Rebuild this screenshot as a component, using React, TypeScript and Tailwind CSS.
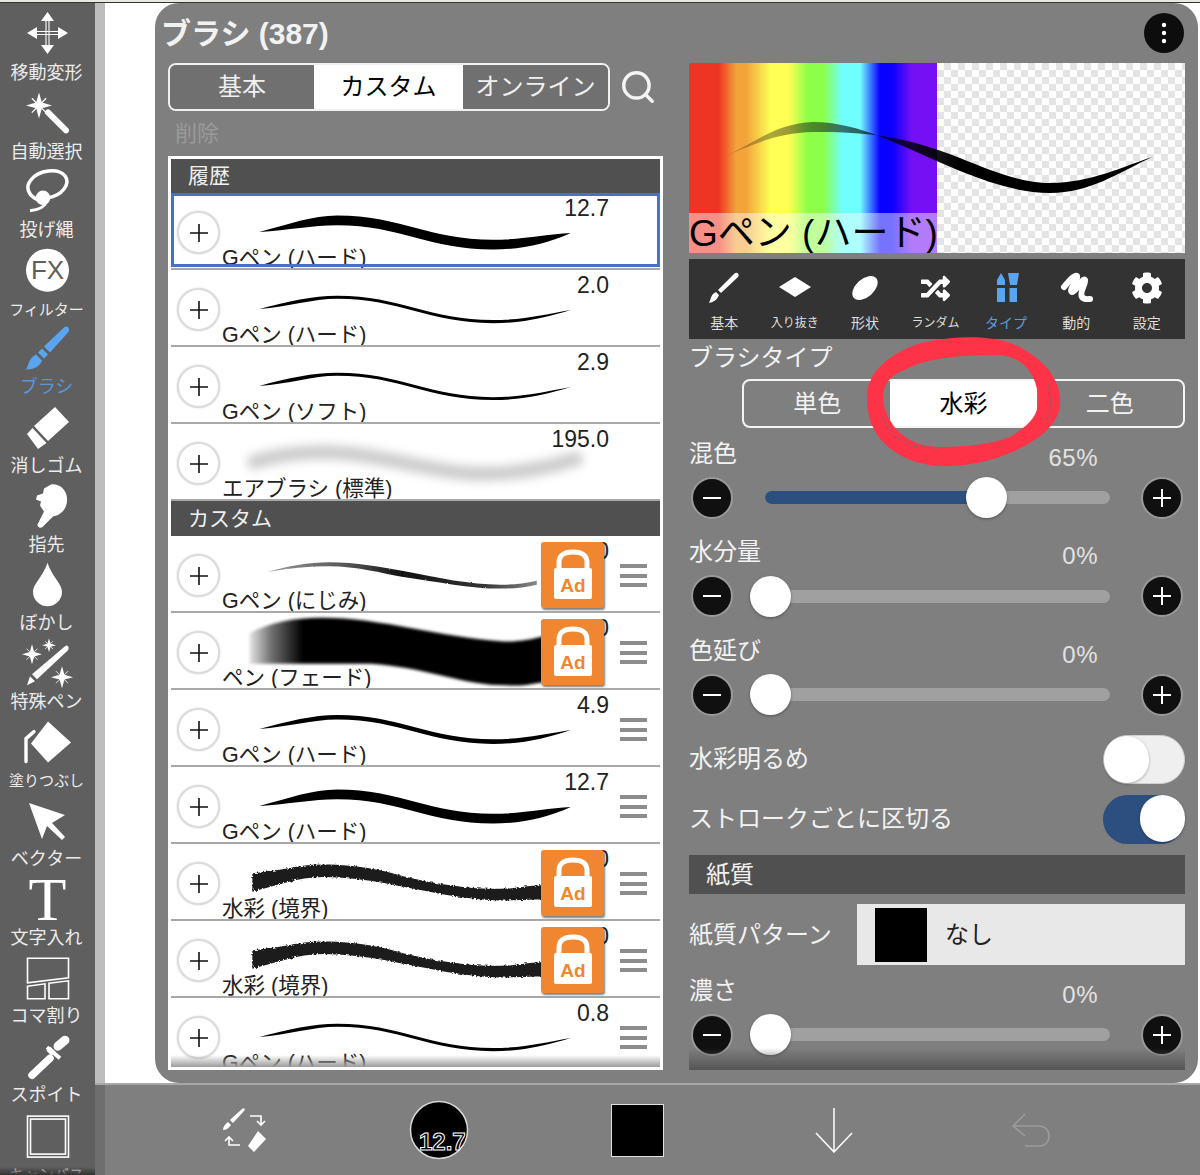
import { FaCog, FaRandom } from "react-icons/fa"
import { Search } from "lucide-react"

const fontSans = "font-['Liberation_Sans','Noto_Sans_CJK_JP',sans-serif]"

// tapered wave used by every pen preview, x in page coords, y local to the row
function penPath(t: number, x0 = 255, x1 = 575, y = 0) {
  const top = 28 + y
  const low = 53 + y
  const sy = 40 + y
  const ey = 41 + y
  return `M${x0} ${sy} C${x0 + 30} ${sy - 8} ${x0 + 55} ${top - t} ${x0 + 80} ${top - t} C${x0 + 145} ${top - t} ${x1 - 145} ${low - t} ${x1 - 80} ${low - t} C${x1 - 50} ${low - t} ${x1 - 25} ${ey + 6 - t} ${x1} ${ey} C${x1 - 25} ${ey + 6 + t} ${x1 - 50} ${low + t} ${x1 - 80} ${low + t} C${x1 - 145} ${low + t} ${x0 + 145} ${top + t} ${x0 + 80} ${top + t} C${x0 + 55} ${top + t} ${x0 + 30} ${sy - 2} ${x0} ${sy}Z`
}

type BrushRow = {
  name: string
  value: string
  kind: "pen" | "air" | "bleed" | "fade" | "rough"
  t?: number
  ad?: boolean
}

const historyRows: BrushRow[] = [
  { name: "Gペン (ハード)", value: "12.7", kind: "pen", t: 5 },
  { name: "Gペン (ハード)", value: "2.0", kind: "pen", t: 1.6 },
  { name: "Gペン (ソフト)", value: "2.9", kind: "pen", t: 1.5 },
  { name: "エアブラシ (標準)", value: "195.0", kind: "air" },
]

const customRows: BrushRow[] = [
  { name: "Gペン (にじみ)", value: "3.0", kind: "bleed", ad: true },
  { name: "ペン (フェード)", value: "50.0", kind: "fade", ad: true },
  { name: "Gペン (ハード)", value: "4.9", kind: "pen", t: 2.4 },
  { name: "Gペン (ハード)", value: "12.7", kind: "pen", t: 5 },
  { name: "水彩 (境界)", value: "20.0", kind: "rough", ad: true },
  { name: "水彩 (境界)", value: "20.0", kind: "rough", ad: true },
  { name: "Gペン (ハード)", value: "0.8", kind: "pen", t: 1.6 },
]

function StrokePreview({ kind, t = 2 }: { kind: BrushRow["kind"]; t?: number }) {
  return (
    <svg className="absolute inset-0 h-full w-full" viewBox="171 0 489 77">
      {kind === "pen" && <path d={penPath(t)} fill="#000" />}
      {kind === "air" && (
        <path
          d="M250 39C270 33 295 29 320 29C380 29 430 51 487 51C520 51 555 44 580 36"
          fill="none"
          stroke="#cdcdcd"
          strokeWidth="15"
          strokeLinecap="round"
          filter="url(#soft)"
        />
      )}
      {kind === "bleed" && (
        <path
          d="M263 37C285 31 305 27 327 27C355 27 380 32 403 36C440 43 470 50 503 50C515 50 528 49 540 46L540 50C528 53 515 54 503 54C470 54 440 47 403 42C380 38 355 31 327 31C305 31 285 33 263 37Z"
          fill="url(#bleedFill)"
          filter="url(#grain)"
        />
      )}
      {kind === "fade" && (
        <path
          d="M245 21C265 10 290 5 320 5C380 5 440 25 503 29C520 30 535 27 550 23L550 70C530 75 515 75 500 74C460 72 420 55 370 52L245 52Z"
          fill="url(#fadeFill)"
          filter="url(#softer)"
        />
      )}
      {kind === "rough" && (
        <path
          d="M248 30C275 28 295 21 320 21C360 21 385 28 403 33C440 42 470 46 503 46C515 46 525 43 550 42L550 57C530 57 515 58 503 58C470 58 435 50 403 44C375 38 345 34 320 34C295 34 270 44 248 49Z"
          fill="#1e1e1e"
          filter="url(#rough)"
        />
      )}
    </svg>
  )
}

function AdBadge() {
  return (
    <div className="absolute left-[370px] top-[6px] flex h-[66px] w-[63px] items-center justify-center rounded-[3px] bg-[#f0862f] shadow-[1px_2px_2px_rgba(0,0,0,0.5)]">
      <svg width="44" height="52" viewBox="0 0 44 52">
        <path d="M8 22 V14 C8 6 13 3 22 3 C31 3 36 6 36 14 V22" fill="none" stroke="#fff" strokeWidth="5" />
        <rect x="3" y="19" width="38" height="31" rx="2" fill="#fff" />
        <text x="22" y="43" textAnchor="middle" fontSize="19" fontWeight="700" fontFamily="Liberation Sans" fill="#f0862f">Ad</text>
      </svg>
    </div>
  )
}

function PlusCircle() {
  return (
    <div className="mt-[18px] flex h-[43px] w-[43px] shrink-0 items-center justify-center rounded-full border-2 border-[#dcdcdc] bg-white text-black shadow-[0_0_2px_rgba(0,0,0,0.2)]">
      <svg width="18" height="18" viewBox="0 0 18 18" stroke="#111" strokeWidth="1.6">
        <path d="M9 0V18M0 9H18" />
      </svg>
    </div>
  )
}

function MenuBars() {
  return (
    <div className="flex w-[27px] flex-col gap-[5.5px]">
      <span className="h-[4px] bg-[#8c8c8c]" />
      <span className="h-[4px] bg-[#8c8c8c]" />
      <span className="h-[4px] bg-[#8c8c8c]" />
    </div>
  )
}

function Row({ row, menu, selected }: { row: BrushRow; menu?: boolean; selected?: boolean }) {
  return (
    <div className="relative flex h-[77px] shrink-0 overflow-hidden border-b-2 border-[#a8a8a8] bg-white pl-[6px] text-black">
      <StrokePreview kind={row.kind} t={row.t} />
      <div className="relative">
        <PlusCircle />
      </div>
      <div className="relative ml-[2px] flex w-[387px] flex-col">
        <div className="mt-[3px] h-[25px] text-right text-[23px] leading-[25px] text-[#222]">{row.value}</div>
        <div className={`mt-[25px] h-[24px] whitespace-nowrap text-[21.5px] leading-[24px] text-[#222] ${row.kind === "fade" ? "w-[150px] bg-white" : ""}`}>
          {row.name}
        </div>
      </div>
      {menu && (
        <div className="relative flex h-full items-center pl-[11px] pt-[4px]">
          <MenuBars />
        </div>
      )}
      {row.ad && <AdBadge />}
      {selected && <div className="absolute inset-x-0 bottom-[1px] top-0 border-[3px] border-[#4472c4]" />}
    </div>
  )
}

function SectionHeader({ label, h }: { label: string; h: string }) {
  return (
    <div className={`flex shrink-0 items-center bg-[#505050] pl-[17px] text-[21px] text-[#f0f0f0] ${h}`}>{label}</div>
  )
}

function RoundButton({ minus }: { minus?: boolean }) {
  return (
    <div className="flex h-[42px] w-[42px] shrink-0 items-center justify-center rounded-full border-2 border-[#9a9a9a] bg-[#101010]">
      <svg width="20" height="20" viewBox="0 0 20 20" stroke="#fff" strokeWidth="2">
        <path d={minus ? "M1 10H19" : "M10 1V19M1 10H19"} />
      </svg>
    </div>
  )
}

function SliderBlock({ label, percent, h }: { label: string; percent: number; h: string }) {
  return (
    <div className={`shrink-0 ${h}`}>
      <div className="flex h-[49px] items-center justify-between pr-[87px]">
        <span className="mt-[2px] text-[24px] text-[#f2f2f2]">{label}</span>
        <span className="mt-[10px] text-[24px] tracking-[0.5px] text-[#e2e2e2]">{percent}%</span>
      </div>
      <div className="flex h-[41px] items-center pl-[2px]">
        <RoundButton minus />
        <div className="relative ml-[32px] mr-[31px] h-[13px] w-[345px] rounded-full bg-[#a0a0a0]">
          <div className="h-full rounded-full bg-[#2d4f7f]" style={{ width: `${percent}%` }} />
          <div
            className="absolute top-[-14px] h-[41px] w-[41px] rounded-full bg-white shadow-[0_1px_3px_rgba(0,0,0,0.35)]"
            style={{ left: `${(percent / 100) * 332 - 15}px` }}
          />
        </div>
        <RoundButton />
      </div>
    </div>
  )
}

function ToggleRow({ label, on }: { label: string; on?: boolean }) {
  return (
    <div className="flex h-[60px] items-center justify-between">
      <span className="text-[24px] text-[#f2f2f2]">{label}</span>
      <div
        className={`flex h-[49px] w-[82px] rounded-full ${on ? "justify-end bg-[#2d4f7f]" : "justify-start border border-[#d0d0d0] bg-[#efefef]"}`}
      >
        <div className="h-[47px] w-[45px] rounded-full bg-white shadow-[0_1px_3px_rgba(0,0,0,0.3)]" />
      </div>
    </div>
  )
}

function Spark({ x, y, r, w = 1.2 }: { x: number; y: number; r: number; w?: number }) {
  const k = r * 0.22
  const d = r * 0.55
  return (
    <g fill="#fff">
      <path d={`M${x} ${y - r} L${x + k} ${y - k} L${x + r} ${y} L${x + k} ${y + k} L${x} ${y + r} L${x - k} ${y + k} L${x - r} ${y} L${x - k} ${y - k}Z`} />
      <path d={`M${x - d} ${y - d} L${x + d} ${y + d} M${x + d} ${y - d} L${x - d} ${y + d}`} stroke="#fff" strokeWidth={w} />
    </g>
  )
}

type SideItem = { label: string; small?: boolean; active?: boolean; icon: React.ReactNode; box: string }

const sideItems: SideItem[] = [
  {
    label: "移動変形",
    box: "0 3 96 58",
    icon: (
      <g fill="#fff">
        <path d="M47.5 12 41 21H54ZM47.5 54 41 45H54ZM27 33 37 27V39ZM68 33 58 27V39Z" />
        <path d="M37 31.5H58M37 34.5H58M46 21V45M49 21V45" stroke="#fff" strokeWidth="1.1" fill="none" />
      </g>
    ),
  },
  {
    label: "自動選択",
    box: "0 81.6 96 58",
    icon: (
      <g>
        <Spark x={39} y={105} r={13} />
        <path d="M48 112 66 130" stroke="#fff" strokeWidth="6" strokeLinecap="round" />
      </g>
    ),
  },
  {
    label: "投げ縄",
    box: "0 160.2 96 58",
    icon: (
      <g fill="none" stroke="#fff" strokeWidth="3.5">
        <path d="M38 200C28 196 25 187 31 180 39 170 58 168 65 176 71 184 62 196 48 198" />
        <circle cx="43" cy="198" r="5.5" fill="#fff" />
        <path d="M46 203C44 208 38 210 30 211" strokeWidth="3" />
      </g>
    ),
  },
  {
    label: "フィルター",
    small: true,
    box: "0 238.8 96 58",
    icon: (
      <g>
        <circle cx="47.5" cy="270" r="21.5" fill="#fff" />
        <text x="47.5" y="279" textAnchor="middle" fontSize="26" fontFamily="Liberation Sans" fill="#5f5f5f">FX</text>
      </g>
    ),
  },
  {
    label: "ブラシ",
    active: true,
    box: "0 317.4 96 58",
    icon: (
      <g fill="#5aa5f0">
        <path d="M64 328C67 325 71 329 68 333L50 353 44 347Z" />
        <path d="M42 349 48 355 44 359 38 353Z" />
        <path d="M36 355 42 361C40 367 34 370 26 370 29 366 28 359 36 355Z" />
      </g>
    ),
  },
  {
    label: "消しゴム",
    box: "0 396 96 58",
    icon: <path d="M55 407 69 422 48 441 34 426ZM32.5 428 46.5 443 38 449 27 434Z" fill="#fff" />,
  },
  {
    label: "指先",
    box: "0 474.6 96 58",
    icon: (
      <path
        d="M51 484C61 483 68 491 67 501 66 510 60 515 53 516L43 526C40 529 36 526 38 523L44 511 42 508 40 505 41 501 36 499 37 495 43 493 44 488Z"
        fill="#fff"
      />
    ),
  },
  {
    label: "ぼかし",
    box: "0 553.2 96 58",
    icon: <path d="M47.5 563C43 577 33 584 33 592A14.5 14.5 0 0 0 62 592C62 584 52 577 47.5 563Z" fill="#fff" />,
  },
  {
    label: "特殊ペン",
    box: "0 631.8 96 58",
    icon: (
      <g>
        <path d="M65 646C67 644 70 647 68 650L37 679 32 674ZM30 676 35 681 27 685Z" fill="#fff" />
        <Spark x={32} y={654} r={10} w={0.8} />
        <Spark x={49} y={645} r={7} w={0.8} />
        <Spark x={62} y={677} r={11} w={0.8} />
      </g>
    ),
  },
  {
    label: "塗りつぶし",
    small: true,
    box: "0 710.4 96 58",
    icon: (
      <g fill="#fff">
        <path d="M48 722 71 743 48 763 31 744Z" />
        <path d="M26 762V739L34 732" fill="none" stroke="#fff" strokeWidth="3.4" strokeLinecap="round" />
      </g>
    ),
  },
  {
    label: "ベクター",
    box: "0 789 96 58",
    icon: <path d="M29 803 65 815 52 823 65 837 62 840 47 826 42 839Z" fill="#fff" />,
  },
  {
    label: "文字入れ",
    box: "0 867.6 96 58",
    icon: (
      <text x="47.5" y="920" textAnchor="middle" fontSize="62" fontFamily="Liberation Serif" fill="#fff">T</text>
    ),
  },
  {
    label: "コマ割り",
    box: "0 946.2 96 58",
    icon: (
      <g fill="none" stroke="#fff" strokeWidth="1.6">
        <path d="M27.5 958.5H68.5V978L27.5 983Z" />
        <path d="M27.5 986.5 45 984V999H27.5ZM49 983.5 68.5 981V999H49Z" />
      </g>
    ),
  },
  {
    label: "スポイト",
    box: "0 1024.8 96 58",
    icon: (
      <g stroke="#fff" fill="none">
        <path d="M58 1046 65 1040" strokeWidth="9" strokeLinecap="round" />
        <path d="M47 1047 60 1058" strokeWidth="4" />
        <path d="M50 1058 32 1075" strokeWidth="7.5" strokeLinecap="round" />
        <path d="M53 1049 49 1053" strokeWidth="7" />
      </g>
    ),
  },
  {
    label: "キャンバス",
    small: true,
    box: "0 1103.4 96 58",
    icon: (
      <g fill="none" stroke="#fff" strokeWidth="1.6">
        <rect x="27.5" y="1115.5" width="41" height="41" />
        <rect x="30.5" y="1118.5" width="35" height="35" />
      </g>
    ),
  },
]

function Sidebar() {
  return (
    <div className="relative flex h-full w-[95px] shrink-0 flex-col overflow-hidden bg-[#5f5f5f]">
      {sideItems.map((item) => (
        <div key={item.label} className="flex h-[78.62px] shrink-0 flex-col items-center">
          <svg className="h-[58px] w-[96px] shrink-0" viewBox={item.box}>
            {item.icon}
          </svg>
          <span
            className={`-ml-[2px] mt-[2px] whitespace-nowrap leading-[21px] ${item.small ? "text-[15px]" : "text-[18px]"} ${item.active ? "text-[#5a96d8]" : "text-[#ececec]"}`}
          >
            {item.label}
          </span>
        </div>
      ))}
      <div className="absolute inset-x-0 bottom-0 h-[8px] bg-gradient-to-b from-transparent to-[#333]" />
    </div>
  )
}

const toolItems = [
  { label: "基本", size: "text-[14px]" },
  { label: "入り抜き", size: "text-[12px]" },
  { label: "形状", size: "text-[14px]" },
  { label: "ランダム", size: "text-[12px]" },
  { label: "タイプ", size: "text-[14px]", active: true },
  { label: "動的", size: "text-[14px]" },
  { label: "設定", size: "text-[14px]" },
]

function ToolIcon({ index }: { index: number }) {
  if (index === 3) return <FaRandom className="text-[29px] text-white" />
  if (index === 6) return <FaCog className="text-[32px] text-white" />
  return (
    <svg width="36" height="32" viewBox="0 0 36 32">
      {index === 0 && (
        <g fill="#fff">
          <path d="M28 2C31 -1 34 2 32 5L15 21 12 18Z" />
          <path d="M10 20 13 23C11 28 8 30 3 31 5 27 5 22 10 20Z" />
        </g>
      )}
      {index === 1 && <path d="M18 5 34 15 18 25 2 15Z" fill="#fff" />}
      {index === 2 && <ellipse cx="18" cy="16" rx="15" ry="9" transform="rotate(-42 18 16)" fill="#fff" />}
      {index === 4 && (
        <g fill="#5aa5f0">
          <path d="M13 1 17 8V13H9V8Z" />
          <rect x="9" y="16" width="8" height="14" />
          <path d="M20 1H31L29 13H22Z" />
          <rect x="21.5" y="16" width="7.5" height="14" />
        </g>
      )}
      {index === 5 && (
        <path
          d="M6 15C11 9 17 2 19 4 21 8 10 18 14 20 19 19 25 5 27 8 28 12 21 20 24 25 26 28 30 27 32 27"
          fill="none"
          stroke="#fff"
          strokeWidth="6"
          strokeLinecap="round"
          strokeLinejoin="round"
        />
      )}
    </svg>
  )
}

function Preview() {
  return (
    <div className="relative flex h-[190px] shrink-0 overflow-hidden">
      <div className="relative h-full w-[248px] bg-[linear-gradient(90deg,#ee3524_0%,#ee3524_12%,#f2a33a_19%,#f2a33a_23%,#ffff55_33%,#ffff55_40%,#8cff48_48%,#8cff48_54%,#70ffff_62%,#70ffff_69%,#0a00ff_77%,#0a00ff_82%,#7510f5_90%,#7510f5_100%)]">
        <div className="absolute inset-x-0 bottom-0 h-[40px] overflow-hidden whitespace-nowrap bg-white/45 text-[37px] leading-[42px] text-black">
          Gペン (ハード)
        </div>
      </div>
      <div className="h-full flex-1 bg-[image:repeating-conic-gradient(#e4e4e4_0%_25%,#ffffff_0%_50%)] bg-[length:14px_14px]" />
      <svg className="absolute inset-0 h-full w-full" viewBox="689 63 496 190">
        <path
          d="M725 156C750 146 775 123 813 122C860 122 900 146 960 171C990 183 1020 193 1050 193C1090 193 1120 172 1152 157C1125 166 1090 183 1050 183C1020 183 990 170 960 158C900 134 860 132 813 132C775 133 750 146 725 156Z"
          fill="url(#previewFill)"
        />
      </svg>
    </div>
  )
}

function RightColumn() {
  return (
    <div className={`relative flex w-[496px] flex-col`}>
      <Preview />
      <div className="mt-[6px] flex h-[80px] shrink-0 bg-[#333333] pr-[3px]">
        {toolItems.map((tool, i) => (
          <div key={tool.label} className="flex flex-1 flex-col items-center">
            <div className="flex h-[50px] items-center pt-[8px]">
              <ToolIcon index={i} />
            </div>
            <span className={`mt-[4px] leading-[20px] ${tool.size} ${tool.active ? "text-[#5a9be0]" : "text-[#dedede]"}`}>
              {tool.label}
            </span>
          </div>
        ))}
      </div>
      <div className="flex h-[40px] shrink-0 items-center pb-[2px] text-[24px] text-[#f2f2f2]">ブラシタイプ</div>
      <div className="ml-[53px] flex h-[49px] shrink-0 items-stretch overflow-hidden rounded-lg border-2 border-[#f4f4f4] text-[24px]">
        <div className="flex flex-1 items-center justify-center text-[#f2f2f2]">単色</div>
        <div className="flex flex-1 items-center justify-center bg-white text-black">水彩</div>
        <div className="flex flex-1 items-center justify-center text-[#f2f2f2]">二色</div>
      </div>
      <SliderBlock label="混色" percent={65} h="h-[98.5px]" />
      <SliderBlock label="水分量" percent={0} h="h-[98.5px]" />
      <SliderBlock label="色延び" percent={0} h="h-[98.5px]" />
      <div className="mt-[5.5px] shrink-0">
        <ToggleRow label="水彩明るめ" />
        <ToggleRow label="ストロークごとに区切る" on />
      </div>
      <div className="mt-[6px] flex h-[39px] shrink-0 items-center bg-[#505050] pl-[17px] text-[24px] text-[#f0f0f0]">紙質</div>
      <div className="mt-[10px] flex h-[61px] shrink-0 items-center justify-between">
        <span className="text-[24px] text-[#f2f2f2]">紙質パターン</span>
        <div className="flex h-full w-[328px] items-center bg-[#e8e8e8] pl-[18px] text-[24px] text-[#222]">
          <div className="h-[54px] w-[52px] bg-black" />
          <span className="ml-[18px]">なし</span>
        </div>
      </div>
      <SliderBlock label="濃さ" percent={0} h="h-[90px]" />
      <div className="absolute inset-x-0 bottom-0 h-[22px] bg-gradient-to-b from-transparent to-[#555555]" />
    </div>
  )
}

function LeftColumn() {
  return (
    <div className="flex w-[495px] flex-col">
      <div className="flex h-[48px] shrink-0 items-center">
        <div className="flex h-full w-[442px] overflow-hidden rounded-lg border-2 border-[#f0f0f0] text-[24px]">
          <div className="flex w-[144px] items-center justify-center bg-[#707070] text-[#f0f0f0]">基本</div>
          <div className="flex w-[149px] items-center justify-center bg-white text-black">カスタム</div>
          <div className="flex flex-1 items-center justify-center whitespace-nowrap bg-[#707070] text-[#f0f0f0]">オンライン</div>
        </div>
        <Search className="ml-[9px] text-[#f4f4f4]" size={38} strokeWidth={2.2} />
      </div>
      <div className="flex h-[45px] shrink-0 items-center pl-[7px] text-[22px] text-[#9a9a9a]">削除</div>
      <div className="relative flex h-[914px] shrink-0 flex-col overflow-hidden border-[3px] border-white bg-white">
        <SectionHeader label="履歴" h="h-[34px]" />
        {historyRows.map((row, i) => (
          <Row key={i} row={row} selected={i === 0} />
        ))}
        <SectionHeader label="カスタム" h="h-[35px]" />
        {customRows.map((row, i) => (
          <Row key={i} row={row} menu />
        ))}
        <div className="absolute inset-x-0 bottom-0 h-[12px] bg-gradient-to-b from-transparent to-[#9c9c9c]" />
      </div>
    </div>
  )
}

function BottomBar() {
  return (
    <div className="flex h-[92px] shrink-0 border-t-2 border-[#a8a8a8] bg-[#7f7f7f]">
      <div className="h-full w-[10px] shrink-0 bg-[#6e6e6e]" />
      <div className="flex flex-1 items-center pl-[39.5px]">
        <div className="flex w-[197px] justify-center">
          <svg width="50" height="46" viewBox="0 0 50 46">
            <g fill="#fff">
              <path d="M24 2C26 0 28 2 26 4L15 16 12 13ZM10 15 13 18C11 21 8 23 5 23 5 20 7 17 10 15Z" />
              <path d="M40 24 48 32 36 45 30 39ZM38 22Z" />
            </g>
            <path d="M32 9H43V18M39 14 43 18 47 14M22 38H11V30M7 34 11 30 15 34" fill="none" stroke="#fff" strokeWidth="1.6" />
          </svg>
        </div>
        <div className="flex w-[197px] justify-center">
          <svg width="62" height="62" viewBox="0 0 62 62">
            <circle cx="30" cy="31" r="28.5" fill="#000" stroke="#d8d8d8" strokeWidth="1.5" />
            <text x="10" y="51" fontSize="24" fontWeight="700" fontFamily="Liberation Sans" fill="#000" stroke="#fff" strokeWidth="1">12.7</text>
          </svg>
        </div>
        <div className="flex w-[197px] justify-center">
          <div className="h-[53px] w-[53px] border border-[#e0e0e0] bg-black" />
        </div>
        <div className="flex w-[197px] justify-center">
          <svg width="40" height="46" viewBox="0 0 40 46" fill="none" stroke="#fff" strokeWidth="1.5">
            <path d="M20 1V45M2 26 20 45 38 26" />
          </svg>
        </div>
        <div className="flex w-[197px] justify-center">
          <svg width="40" height="34" viewBox="0 0 40 34" fill="none" stroke="#9c9c9c" strokeWidth="1.5">
            <path d="M2 13H28C34 13 38 17 38 23S34 33 28 33H14M14 1 2 13 14 23" />
          </svg>
        </div>
      </div>
    </div>
  )
}

export default function App() {
  return (
    <div className={`relative flex h-[1175px] w-[1200px] flex-col overflow-hidden bg-white ${fontSans}`}>
      <svg className="absolute h-0 w-0">
        <defs>
          <linearGradient id="previewFill" gradientUnits="userSpaceOnUse" x1="725" y1="0" x2="960" y2="0">
            <stop offset="0" stopColor="#000" stopOpacity="0.2" />
            <stop offset="0.5" stopColor="#000" stopOpacity="0.55" />
            <stop offset="1" stopColor="#000" stopOpacity="1" />
          </linearGradient>
          <linearGradient id="fadeFill" gradientUnits="userSpaceOnUse" x1="240" y1="0" x2="300" y2="0">
            <stop offset="0" stopColor="#000" stopOpacity="0" />
            <stop offset="0.45" stopColor="#000" stopOpacity="0.55" />
            <stop offset="1" stopColor="#000" stopOpacity="1" />
          </linearGradient>
          <linearGradient id="bleedFill" gradientUnits="userSpaceOnUse" x1="263" y1="0" x2="540" y2="0">
            <stop offset="0" stopColor="#999" />
            <stop offset="0.3" stopColor="#555" />
            <stop offset="0.5" stopColor="#111" />
            <stop offset="0.8" stopColor="#333" />
            <stop offset="1" stopColor="#888" />
          </linearGradient>
          <filter id="soft" x="-10%" y="-80%" width="120%" height="260%">
            <feGaussianBlur stdDeviation="5" />
          </filter>
          <filter id="softer" x="-10%" y="-20%" width="120%" height="140%">
            <feGaussianBlur stdDeviation="1.5" />
          </filter>
          <filter id="rough" x="-5%" y="-30%" width="110%" height="160%">
            <feTurbulence type="fractalNoise" baseFrequency="0.5" numOctaves="2" seed="4" />
            <feDisplacementMap in="SourceGraphic" scale="4" />
          </filter>
          <filter id="grain" x="-5%" y="-50%" width="110%" height="200%">
            <feTurbulence type="fractalNoise" baseFrequency="0.7" numOctaves="1" seed="2" />
            <feDisplacementMap in="SourceGraphic" scale="2" />
          </filter>
        </defs>
      </svg>
      <div className="h-[3px] shrink-0 border-b border-[#333] bg-[#e8e8e0]" />
      <div className="flex min-h-0 flex-1">
        <Sidebar />
        <div className="flex min-w-0 flex-1 flex-col">
          <div className="flex h-[1080px] shrink-0">
            <div className="w-[10px] shrink-0 bg-[#bdbdbd]" />
            <div className="w-[50px] shrink-0 bg-white" />
            <div className="flex w-[1043px] flex-col rounded-[24px] bg-[#7f7f7f] px-[13px]">
              <div className="flex h-[60px] shrink-0 items-center justify-between pr-[1px]">
                <span className="-ml-[7px] mt-[1px] text-[30px] font-bold leading-[36px] text-[#f2f2f2]">ブラシ (387)</span>
                <div className="mb-[1px] flex h-[40px] w-[40px] items-center justify-center rounded-full bg-[#0d0d0d]">
                  <svg width="6" height="22" viewBox="0 0 6 22" fill="#fff">
                    <circle cx="3" cy="3" r="2.2" />
                    <circle cx="3" cy="11" r="2.2" />
                    <circle cx="3" cy="19" r="2.2" />
                  </svg>
                </div>
              </div>
              <div className="flex h-[1007px] gap-[26px]">
                <LeftColumn />
                <RightColumn />
              </div>
            </div>
          </div>
          <BottomBar />
        </div>
      </div>
      <svg className="pointer-events-none absolute inset-0 h-full w-full" viewBox="0 0 1200 1175" fill="none">
        <path
          fill="#ff3348"
          fillRule="evenodd"
          d="M867 400C865 370 895 350 925 342C960 335 1000 334 1025 350C1050 365 1062 385 1060 405C1058 430 1025 450 990 460C960 468 925 470 900 455C878 442 868 425 867 400ZM883 397C883 385 890 375 905 370C925 358 960 355 1000 355C1020 357 1035 370 1038 395C1040 415 1030 425 1010 437C990 445 960 447 940 447C915 447 900 435 893 425C887 415 883 408 883 397Z"
        />
        <path d="M882 416C888 430 898 440 912 446C920 448 930 446 938 449" stroke="#a8535e" strokeWidth="1" />
        <path d="M1048 385C1052 400 1051 415 1045 425" stroke="#a8535e" strokeWidth="1" />
      </svg>
    </div>
  )
}
